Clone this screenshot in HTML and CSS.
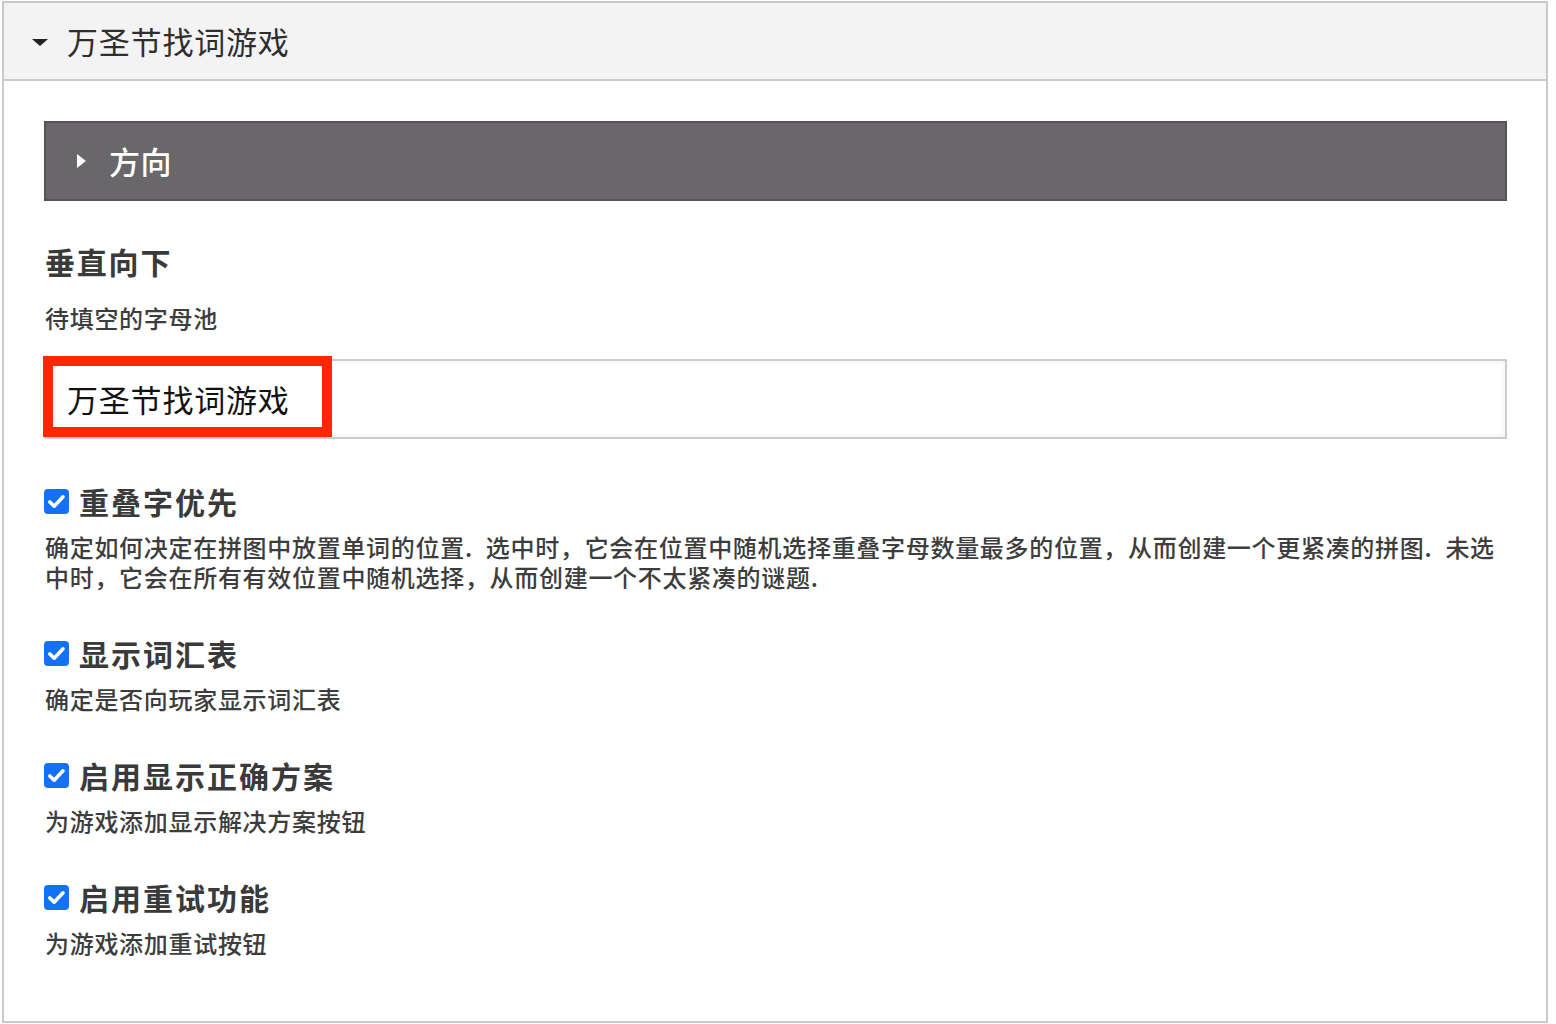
FILE: index.html
```html
<!DOCTYPE html>
<html lang="zh-CN">
<head>
<meta charset="utf-8">
<title>万圣节找词游戏</title>
<link rel="stylesheet" href="styles.css">
</head>
<body>
<section class="panel">
  <header class="panel-head">
    <span class="caret-down"></span>
    <span class="panel-title">万圣节找词游戏</span>
  </header>
  <div class="panel-body">
    <div class="bar">
      <span class="caret-right"></span>
      <span class="bar-title">方向</span>
    </div>
    <h2 class="section-title">垂直向下</h2>
    <div class="field-label">待填空的字母池</div>
    <div class="input">
      <span class="input-text">万圣节找词游戏</span>
      <span class="highlight"></span>
    </div>

    <div class="option first">
      <div class="option-head">
        <span class="check"><svg viewBox="0 0 25 25" width="25" height="25"><path d="M5.8 13 L10.2 17.2 L19 7.8" fill="none" stroke="#fff" stroke-width="3.6" stroke-linecap="round" stroke-linejoin="round"/></svg></span>
        <span class="option-title">重叠字优先</span>
      </div>
      <p class="option-desc">确定如何决定在拼图中放置单词的位置. 选中时，它会在位置中随机选择重叠字母数量最多的位置，从而创建一个更紧凑的拼图. 未选中时，它会在所有有效位置中随机选择，从而创建一个不太紧凑的谜题.</p>
    </div>

    <div class="option">
      <div class="option-head">
        <span class="check"><svg viewBox="0 0 25 25" width="25" height="25"><path d="M5.8 13 L10.2 17.2 L19 7.8" fill="none" stroke="#fff" stroke-width="3.6" stroke-linecap="round" stroke-linejoin="round"/></svg></span>
        <span class="option-title">显示词汇表</span>
      </div>
      <p class="option-desc">确定是否向玩家显示词汇表</p>
    </div>

    <div class="option">
      <div class="option-head">
        <span class="check"><svg viewBox="0 0 25 25" width="25" height="25"><path d="M5.8 13 L10.2 17.2 L19 7.8" fill="none" stroke="#fff" stroke-width="3.6" stroke-linecap="round" stroke-linejoin="round"/></svg></span>
        <span class="option-title">启用显示正确方案</span>
      </div>
      <p class="option-desc">为游戏添加显示解决方案按钮</p>
    </div>

    <div class="option">
      <div class="option-head">
        <span class="check"><svg viewBox="0 0 25 25" width="25" height="25"><path d="M5.8 13 L10.2 17.2 L19 7.8" fill="none" stroke="#fff" stroke-width="3.6" stroke-linecap="round" stroke-linejoin="round"/></svg></span>
        <span class="option-title">启用重试功能</span>
      </div>
      <p class="option-desc">为游戏添加重试按钮</p>
    </div>
  </div>
</section>
</body>
</html>
```

FILE: styles.css
```css
html, body {
  margin: 0;
  padding: 0;
  background: #ffffff;
}

body {
  font-family: "Noto Sans CJK SC", "Noto Sans", sans-serif;
  color: #3d3d3d;
  padding-top: 1px;
}

.panel {
  margin: 0 8px 0 2px;
  border: 2px solid #c9c9c9;
  height: 1022px;
  box-sizing: border-box;
  background: #fff;
}

.panel-head {
  display: flex;
  align-items: center;
  height: 76px;
  background: #f3f3f3;
  border-bottom: 2px solid #c9c9c9;
  padding-left: 28px;
}

.caret-down {
  width: 0;
  height: 0;
  border-left: 8px solid transparent;
  border-right: 8px solid transparent;
  border-top: 7px solid #222;
  margin-right: 19px;
  margin-top: 2px;
}

.panel-title {
  font-size: 31px;
  letter-spacing: 0.8px;
  color: #2e2e2e;
  line-height: 40px;
}

.panel-body {
  padding: 40px 39px 0 40px;
}

.bar {
  display: flex;
  align-items: center;
  height: 76px;
  background: #6a676a;
  border: 2px solid #555356;
  padding-left: 31px;
}

.caret-right {
  width: 0;
  height: 0;
  border-top: 7px solid transparent;
  border-bottom: 7px solid transparent;
  border-left: 9px solid #fff;
  margin-right: 23px;
}

.bar-title {
  color: #ffffff;
  font-size: 31px;
  font-weight: 500;
  letter-spacing: 0.5px;
  line-height: 40px;
}

.section-title {
  margin: 40px 0 0 1px;
  font-size: 30px;
  font-weight: 700;
  letter-spacing: 1.8px;
  line-height: 40px;
  color: #3a3a3a;
}

.field-label {
  margin: 22px 0 0 1px;
  font-size: 24px;
  font-weight: 500;
  letter-spacing: 0.7px;
  line-height: 30px;
  color: #3d3d3d;
}

.input {
  position: relative;
  margin-top: 26px;
  height: 80px;
  box-sizing: border-box;
  border: 2px solid #cccccc;
  box-shadow: inset 0 0 6px rgba(0, 0, 0, 0.08);
  display: flex;
  align-items: center;
  padding-left: 21px;
}

.input-text {
  font-size: 31px;
  letter-spacing: 0.8px;
  color: #111;
  line-height: 40px;
}

.highlight {
  position: absolute;
  left: -3px;
  top: -5px;
  width: 289px;
  height: 81px;
  box-sizing: border-box;
  border: 10px solid #ff2600;
}

.option {
  margin-top: 41px;
}

.option.first {
  margin-top: 42px;
}

.option-head {
  display: flex;
  align-items: center;
  height: 40px;
}

.check {
  width: 25px;
  height: 25px;
  border-radius: 4px;
  background: #1471f5;
  display: flex;
  margin-right: 10px;
  flex: none;
}

.option-title {
  font-size: 30px;
  font-weight: 700;
  letter-spacing: 2px;
  line-height: 40px;
  color: #3a3a3a;
}

.option-desc {
  margin: 11px 0 0 1px;
  font-size: 24px;
  font-weight: 500;
  letter-spacing: 0.7px;
  word-spacing: 7px;
  line-height: 30px;
  color: #3d3d3d;
}
```
